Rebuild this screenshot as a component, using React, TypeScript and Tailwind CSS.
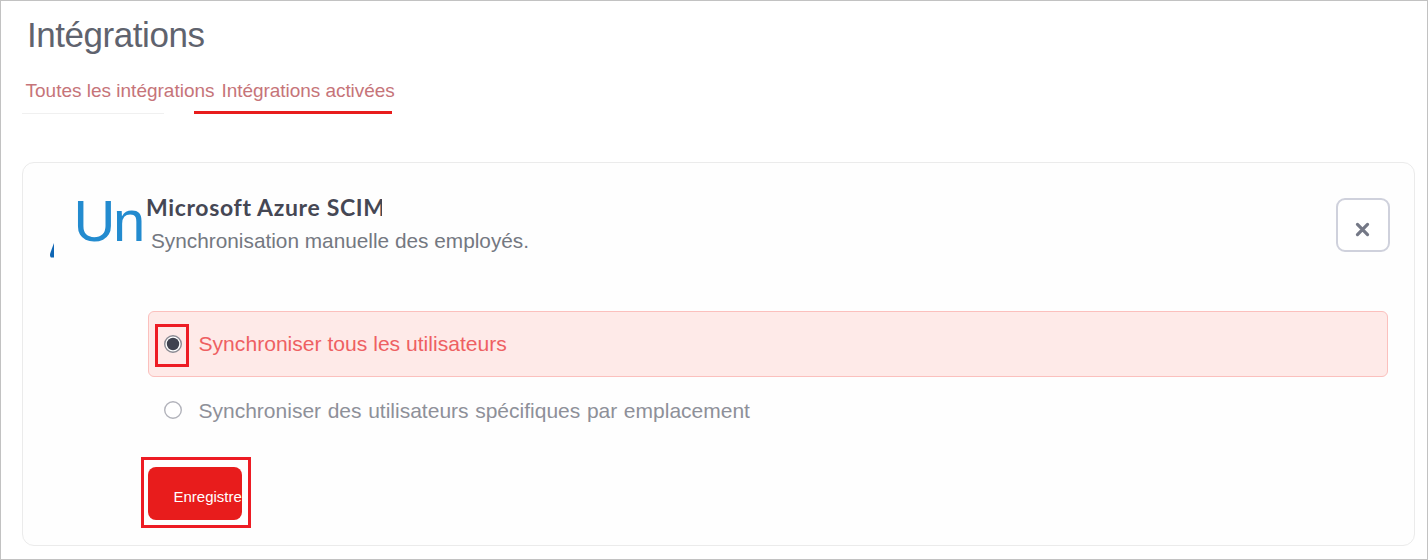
function AzureMark() {
  return (
    <svg className="mt-[45px] h-[16px] w-[4px] shrink-0" viewBox="0 0 4 16">
      <path d="M4 0V14.500H1.500C.3 14.500-.3 12.500.2 10.500L2.300 4.500Z" fill="#0f66b4" />
    </svg>
  );
}

function Radio({ checked = false }: { checked?: boolean }) {
  return (
    <svg className="h-5 w-5 shrink-0" viewBox="0 0 20 20">
      <circle cx="10" cy="10" r="8.300" fill="#fff" stroke={checked ? "#8b8b93" : "#b2b3bb"} strokeWidth="1.400" />
      {checked && <circle cx="10" cy="10" r="6.200" fill="#3f424f" />}
    </svg>
  );
}

export default function App() {
  return (
    <div className="flex h-[560px] w-[1428px] flex-col overflow-hidden border border-[#c2c2c2] bg-white pt-[14px] font-['Liberation_Sans',Arial,sans-serif]">
      <h1 className="pl-[26px] text-[35px] leading-[40px] tracking-[-0.45px] text-[#5f636e]">Intégrations</h1>
      <nav className="mt-[24px] flex gap-[6px] pl-[24.5px] text-[19px] leading-[24px] whitespace-nowrap text-[#c67479]">
        <span className="w-[190px]">Toutes les intégrations</span>
        <span className="tracking-[-0.05px]">Intégrations activées</span>
      </nav>
      <div className="mt-[8px] flex items-end gap-[30px] pl-[21px]">
        <div className="h-px w-[142px] bg-[#f0f0f0]" />
        <div className="h-[3px] w-[198px] bg-[#e81c1c]" />
      </div>
      <section className="mt-[48px] ml-[21px] h-[384px] w-[1393px] rounded-[12px] border border-[#ebebeb] bg-[#fefefe]">
        <header className="flex h-[148px] items-start pt-[35px] pr-[24px] pl-[27px]">
          <AzureMark />
          <div className="ml-[19.5px] w-[73.500px] shrink-0 text-[58px] leading-[46px] tracking-[-2.5px] text-[#238bcf]">Un</div>
          <div className="min-w-0 flex-1">
            <h2 className="-mt-[2px] -ml-[1px] h-[29px] w-[236px] overflow-hidden font-['Lato',sans-serif] text-[23px] leading-[22px] font-bold tracking-[0.65px] whitespace-nowrap text-[#454754]">
              Microsoft Azure SCIM
            </h2>
            <p className="mt-[4px] pl-[4px] text-[20.8px] leading-[24px] text-[#747881]">
              Synchronisation manuelle des employés.
            </p>
          </div>
          <button className="flex h-[54px] w-[54px] items-center justify-center rounded-[9px] border-2 border-[#cfd1dc] bg-white pt-[9px] pr-[2px]">
            <svg className="h-[15px] w-[15px]" viewBox="0 0 14 14">
              <path d="M2.300 2.300l9.400 9.400M11.700 2.300l-9.400 9.400" stroke="#747886" strokeWidth="3" strokeLinecap="round" />
            </svg>
          </button>
        </header>
        <div className="ml-[125px] flex h-[66px] w-[1240px] items-center rounded-[6px] border border-[#fbc0bd] bg-[#feeae8] pl-[6px]">
          <div className="mt-[2px] flex h-[43px] w-[34px] items-center justify-center border-[3px] border-[#ed1c24] pb-[3px] pl-[2px]">
            <Radio checked />
          </div>
          <span className="pl-[9.500px] text-[21.1px] leading-[24px] text-[#ee6062]">Synchroniser tous les utilisateurs</span>
        </div>
        <div className="ml-[125px] flex h-[66px] items-center pl-[15px]">
          <Radio />
          <span className="pt-[2px] pl-[15.500px] text-[21px] leading-[24px] [word-spacing:0.8px] text-[#8e9099]">
            Synchroniser des utilisateurs spécifiques par emplacement
          </span>
        </div>
        <div className="mt-[14px] ml-[118px] flex h-[71px] w-[110px] border-[3px] border-[#ed1c24] pt-[7px] pl-[4px]">
          <button className="h-[53px] w-[94px] overflow-hidden rounded-[8px] bg-[#e81c1c] pt-[7px] pl-[25.500px] text-left text-[15px] leading-[20px] whitespace-nowrap text-white">
            Enregistre
          </button>
        </div>
      </section>
    </div>
  );
}
